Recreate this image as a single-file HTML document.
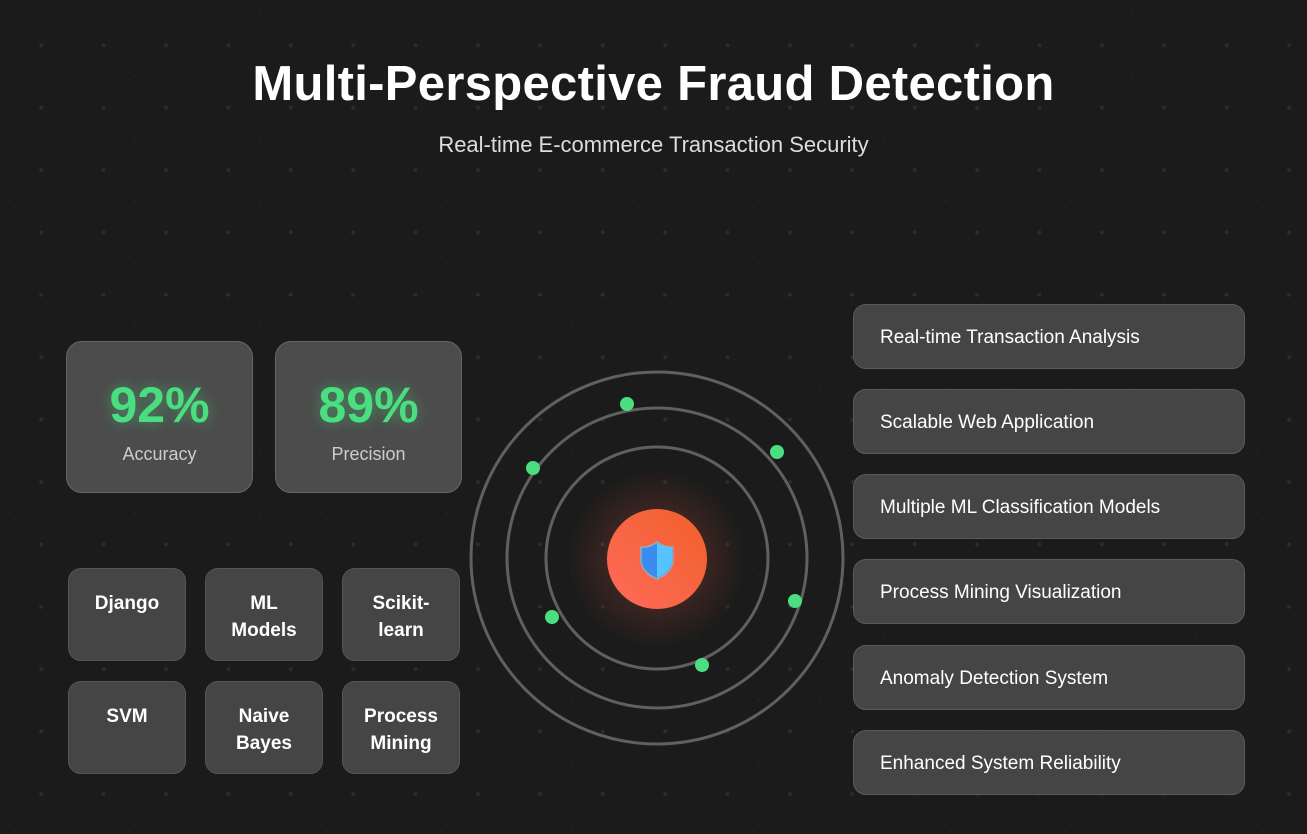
<!DOCTYPE html>
<html><head><meta charset="utf-8"><style>
*{margin:0;padding:0;box-sizing:border-box}
body{width:1307px;height:834px;overflow:hidden;background:#1b1b1b;font-family:"Liberation Sans",sans-serif;position:relative;color:#fff}
.bg{position:absolute;inset:0;background-image:radial-gradient(circle,#2c2c2c 1.8px,transparent 2.2px),radial-gradient(circle,#252525 0.8px,transparent 1.2px);background-size:62.4px 62.4px,62.4px 62.4px;background-position:10px 14px,41px 45px}
h1{position:absolute;top:56px;left:0;width:1307px;text-align:center;font-size:49px;font-weight:bold;letter-spacing:0.3px}
.sub{position:absolute;top:132px;left:0;width:1307px;text-align:center;font-size:22px;color:#ddd;font-weight:300}
.card{position:absolute;background:rgba(85,85,85,0.85);border:1.5px solid #666;border-radius:16px}
.stat{width:187px;height:152px;top:341px;text-align:center}
.stat .n{margin-top:34px;font-size:50px;font-weight:bold;color:#4ade80;text-shadow:0 0 14px rgba(74,222,128,.45)}
.stat .l{margin-top:10px;font-size:18px;color:#ccc}
.tech{width:118px;height:93px;text-align:center;font-weight:bold;font-size:19px;line-height:27px;padding-top:21px;background:rgba(72,72,72,0.95);border-color:#555;border-radius:13px}
.feat{left:853px;width:392px;height:65px;font-size:19px;padding-left:26px;line-height:65px;background:rgba(72,72,72,0.95);border-color:#5a5a5a;border-radius:13px}
</style></head><body>
<div class="bg"></div>
<h1>Multi-Perspective Fraud Detection</h1>
<div class="sub">Real-time E-commerce Transaction Security</div>

<div class="card stat" style="left:66px"><div class="n">92%</div><div class="l">Accuracy</div></div>
<div class="card stat" style="left:275px"><div class="n">89%</div><div class="l">Precision</div></div>

<div class="card tech" style="left:68px;top:568px">Django</div>
<div class="card tech" style="left:205px;top:568px">ML<br>Models</div>
<div class="card tech" style="left:342px;top:568px">Scikit-<br>learn</div>
<div class="card tech" style="left:68px;top:681px">SVM</div>
<div class="card tech" style="left:205px;top:681px">Naive<br>Bayes</div>
<div class="card tech" style="left:342px;top:681px">Process<br>Mining</div>

<svg style="position:absolute;left:0;top:0" width="1307" height="834">
<defs>
<radialGradient id="glow"><stop offset="0" stop-color="#ff6040" stop-opacity=".4"/><stop offset="0.6" stop-color="#ff6040" stop-opacity=".12"/><stop offset="1" stop-color="#ff6040" stop-opacity="0"/></radialGradient>
<linearGradient id="core" x1="1" y1="0" x2="0" y2="1"><stop offset="0" stop-color="#f0602a"/><stop offset="1" stop-color="#ff6a5a"/></linearGradient>
</defs>
<circle cx="657" cy="559" r="90" fill="url(#glow)"/>
<g fill="none" stroke="#606060" stroke-width="3">
<circle cx="657" cy="558" r="186"/><circle cx="657" cy="558" r="150"/><circle cx="657" cy="558" r="111"/>
</g>
<g fill="#4ade80">
<circle cx="627" cy="404" r="7"/><circle cx="777" cy="452" r="7"/><circle cx="533" cy="468" r="7"/>
<circle cx="795" cy="601" r="7"/><circle cx="552" cy="617" r="7"/><circle cx="702" cy="665" r="7"/>
</g>
<circle cx="657" cy="559" r="50" fill="url(#core)"/>
<path d="M657 542 Q649 548 641 547 L641 562 Q643 573 657 579 Q671 573 673 562 L673 547 Q665 548 657 542Z" fill="#3b8cf0" stroke="#9ab" stroke-width="1.5"/>
<path d="M657 543 Q665 548 672 547 L672 562 Q670 572 657 578Z" fill="#55c3ff"/>
</svg>

<div class="card feat" style="top:304px">Real-time Transaction Analysis</div>
<div class="card feat" style="top:389px">Scalable Web Application</div>
<div class="card feat" style="top:474px">Multiple ML Classification Models</div>
<div class="card feat" style="top:559px">Process Mining Visualization</div>
<div class="card feat" style="top:645px">Anomaly Detection System</div>
<div class="card feat" style="top:730px">Enhanced System Reliability</div>
</body></html>
